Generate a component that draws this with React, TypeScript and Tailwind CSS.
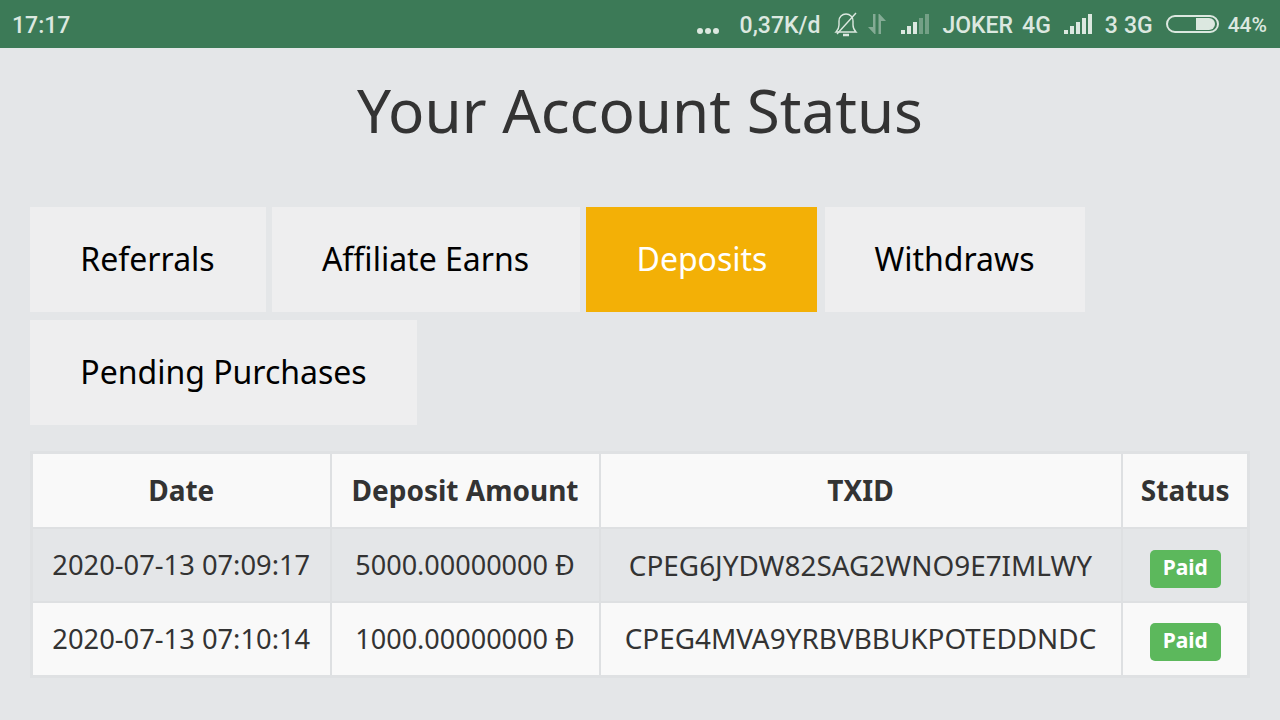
const tabs = [
  { label: "Referrals", width: "w-[236px]", mr: "mr-[6px] pr-[1px]" },
  { label: "Affiliate Earns", width: "w-[308px]", mr: "mr-[6px] pr-[1px]" },
  { label: "Deposits", width: "w-[231px]", mr: "mr-[8px]", active: true },
  { label: "Withdraws", width: "w-[260px]", mr: "pr-[1px]" },
];

const rows = [
  { date: "2020-07-13 07:09:17", amount: "5000.00000000 Đ", txid: "CPEG6JYDW82SAG2WNO9E7IMLWY", cls: "h-[74px] bg-[#e4e6e8] [&>td]:pt-[2px]" },
  { date: "2020-07-13 07:10:14", amount: "1000.00000000 Đ", txid: "CPEG4MVA9YRBVBBUKPOTEDDNDC", cls: "h-[75px] bg-[#f9f9f9] [&>td]:pt-[1px]" },
];

function SignalIcon({ dim = false }: { dim?: boolean }) {
  const heights = [4, 8, 12, 16, 20];
  return (
    <svg width="30" height="22" viewBox="0 0 30 22" className="shrink-0">
      {heights.map((h, i) => (
        <rect
          key={i}
          x={1 + i * 6}
          y={21 - h}
          width="4"
          height={h}
          fill="#dce8e0"
          opacity={dim && i > 2 ? 0.35 : 1}
        />
      ))}
    </svg>
  );
}

function StatusBar() {
  return (
    <div className="flex h-12 items-center justify-between bg-[#3c7a57] pl-3 pr-[13px] pt-[4px] font-['Roboto',sans-serif] text-[23px] font-medium text-[#dce8e0]">
      <span>17:17</span>
      <div className="flex items-center">
        <div className="mr-[21px] mt-[9px] flex gap-[2px]">
          <span className="size-[6px] rounded-full bg-[#dce8e0]" />
          <span className="size-[6px] rounded-full bg-[#dce8e0]" />
          <span className="size-[6px] rounded-full bg-[#dce8e0]" />
        </div>
        <span>0,37K/d</span>
        <svg width="24" height="25" viewBox="0 0 24 25" fill="none" stroke="#dce8e0" strokeWidth="1.4" className="ml-[14px] mb-[4px]">
          <path d="M2 20c2-2 3-4 3-7V9c0-4 3-7 7-7s7 3 7 7v4c0 3 1 5 3 7z" />
          <path d="M9 23h6" strokeWidth="2.5" />
          <path d="M22 1 3 22" />
        </svg>
        <svg width="22" height="22" viewBox="0 0 22 22" fill="#dce8e0" opacity="0.45" className="ml-[8px] mb-[4px]">
          <path d="M7 1h2.5v20h-1L2 14h5zM12.5 1h1l6.500 7H15v13h-2.500z" />
        </svg>
        <div className="ml-[12px] mb-[4px]">
          <SignalIcon dim />
        </div>
        <span className="ml-[12px]">JOKER</span>
        <span className="ml-[9px]">4G</span>
        <div className="ml-[12px] mb-[4px]">
          <SignalIcon />
        </div>
        <span className="ml-[12px]">3</span>
        <span className="ml-[6px]">3G</span>
        <div className="ml-[13px] mb-[4px] flex h-[18px] w-[53px] items-center justify-end rounded-full border-2 border-[#dce8e0] pr-[2px]">
          <div className="h-[12px] w-[19px] rounded-r-full bg-[#dce8e0]" />
        </div>
        <span className="ml-[9px] text-[21px]">44%</span>
      </div>
    </div>
  );
}

export default function App() {
  return (
    <div className="h-[720px] w-[1280px] overflow-hidden bg-[#e4e6e8] font-['Noto_Sans',sans-serif]">
      <StatusBar />
      <h1 className="mt-[18px] text-center text-[60.200px] leading-[88px] text-[#333333]">Your Account Status</h1>
      <div className="mt-[53px] px-[30px]">
        <div className="flex flex-wrap gap-y-[8px]">
          {tabs.map((tab) => (
            <div
              key={tab.label}
              className={`flex h-[105px] items-center justify-center pb-[2px] text-[32px] ${tab.width} ${tab.mr} ${
                tab.active ? "bg-[#f3b006] pl-[1px] text-white" : "bg-[#eeeeef] text-black"
              }`}
            >
              {tab.label}
            </div>
          ))}
          <div className="flex h-[105px] w-[387px] items-center justify-center bg-[#eeeeef] pb-[2px] text-[32px] text-black">
            Pending Purchases
          </div>
        </div>
        <table className="mt-[26px] w-[1220px] table-fixed border-collapse border-[3px] border-[#dfe1e3] text-center text-[27.300px] text-[#333333]">
          <thead>
            <tr className="h-[75px] bg-[#f9f9f9] text-[28px] font-bold">
              <th className="w-[299px] border-2 border-[#dee0e2] pb-[1px]">Date</th>
              <th className="w-[269px] border-2 border-[#dee0e2] pb-[1px]">Deposit Amount</th>
              <th className="w-[522px] border-2 border-[#dee0e2] pb-[1px]">TXID</th>
              <th className="border-2 border-[#dee0e2] pb-[1px] pl-[1px]">Status</th>
            </tr>
          </thead>
          <tbody>
            {rows.map((row) => (
              <tr key={row.txid} className={row.cls}>
                <td className="border-2 border-[#dee0e2]">{row.date}</td>
                <td className="border-2 border-[#dee0e2] text-[27px]">{row.amount}</td>
                <td className="border-2 border-[#dee0e2] text-[27.900px]">{row.txid}</td>
                <td className="border-2 border-[#dee0e2] pl-[1px]">
                  <span className="mt-[6px] inline-block h-[38px] w-[71px] rounded-[5px] bg-[#5cb85c] text-[21px] font-bold leading-[34px] text-white">
                    Paid
                  </span>
                </td>
              </tr>
            ))}
          </tbody>
        </table>
      </div>
    </div>
  );
}
